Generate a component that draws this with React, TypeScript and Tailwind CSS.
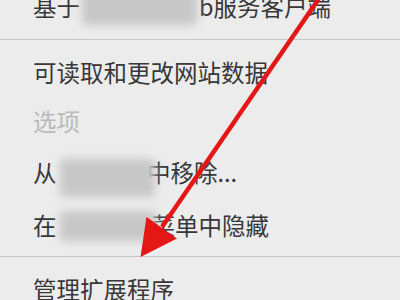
import React from "react";

const font = { fontFamily: '"Noto Sans CJK SC", "Noto Sans", sans-serif' };

function Blur({ className }: { className: string }) {
  return <div className={`shrink-0 rounded-[4px] bg-[#c7c7c7] blur-[4px] ${className}`} />;
}

export default function App() {
  return (
    <div
      className="relative w-[400px] h-[300px] overflow-hidden bg-[#ececec] text-[23.5px] leading-none text-[#383838]"
      style={font}
    >
      <div className="flex flex-col mt-[-25px]">
        <div className="h-[64px] flex items-center pl-[33px]">
          <span>基于</span>
          <Blur className="ml-[2px] w-[115px] h-[36px]" />
          <span className="ml-[2px]">b服务客户端</span>
        </div>
        <div className="h-[1px] bg-[#c8c8c8]" />
        <div className="pt-[8px] flex flex-col">
          <div className="h-[50px] flex items-center pl-[33px]">
            <span>可读取和更改网站数据</span>
          </div>
          <div className="h-[48px] flex items-center pl-[33px]">
            <span className="text-[#b9b9b9]">选项</span>
          </div>
          <div className="h-[54px] flex items-center pl-[33px]">
            <span>从</span>
            <Blur className="ml-[3.5px] w-[95px] h-[38px] mt-[10px]" />
            <span className="ml-[-8px]">中移除...</span>
          </div>
          <div className="h-[52px] flex items-center pl-[33px]">
            <span>在</span>
            <Blur className="ml-[3.5px] w-[96px] h-[30px]" />
            <span className="ml-[-4.5px]">菜单中隐藏</span>
          </div>
        </div>
        <div className="h-[4px]" />
        <div className="h-[1px] bg-[#c8c8c8]" />
        <div className="h-[66px] flex items-center pl-[33px]">
          <span>管理扩展程序</span>
        </div>
      </div>
      <svg
        className="absolute inset-0 pointer-events-none"
        width="400"
        height="300"
        viewBox="0 0 400 300"
      >
        <line x1="320" y1="-3" x2="162" y2="227" stroke="#e51616" strokeWidth="4.5" />
        <polygon points="140.5,257 146.5,217 177,238.5" fill="#e51616" />
      </svg>
    </div>
  );
}
